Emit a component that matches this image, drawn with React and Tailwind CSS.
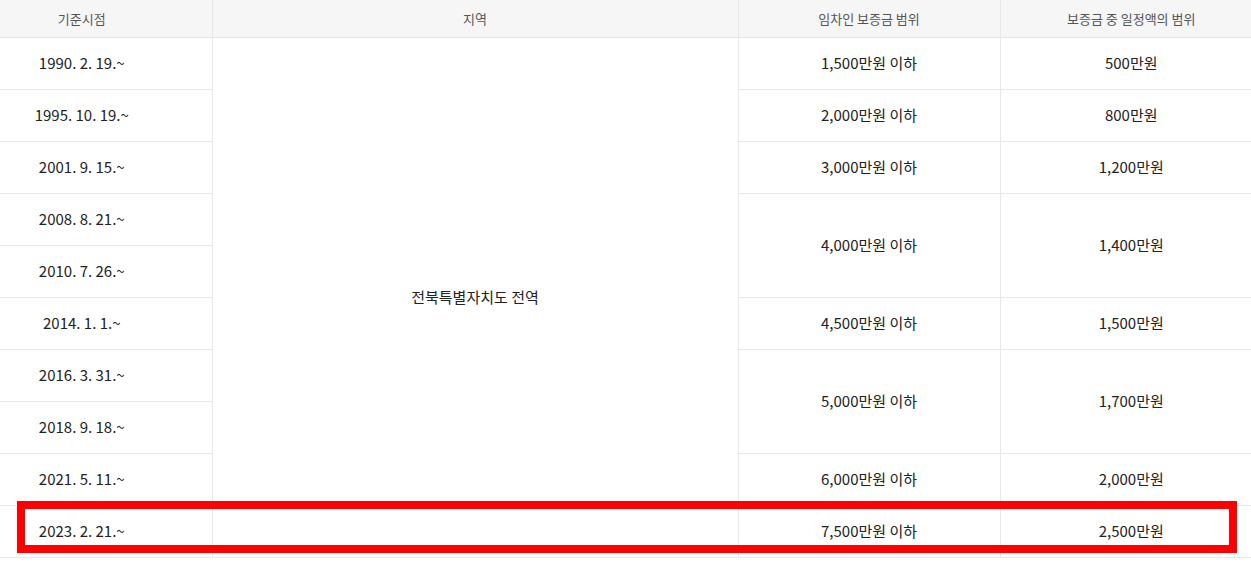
const rows = [
  { date: "1990. 2. 19.~", range: "1,500만원 이하", amount: "500만원" },
  { date: "1995. 10. 19.~", range: "2,000만원 이하", amount: "800만원" },
  { date: "2001. 9. 15.~", range: "3,000만원 이하", amount: "1,200만원" },
  { date: "2008. 8. 21.~", range: "4,000만원 이하", amount: "1,400만원", span: 2 },
  { date: "2010. 7. 26.~", skip: true },
  { date: "2014. 1. 1.~", range: "4,500만원 이하", amount: "1,500만원" },
  { date: "2016. 3. 31.~", range: "5,000만원 이하", amount: "1,700만원", span: 2 },
  { date: "2018. 9. 18.~", skip: true },
  { date: "2021. 5. 11.~", range: "6,000만원 이하", amount: "2,000만원" },
  { date: "2023. 2. 21.~", range: "7,500만원 이하", amount: "2,500만원" },
];

const cell = "border border-[#e8e8e8] text-center align-middle";

const App = () => {
  return (
    <div
      className="relative w-[1251px] h-[566px] bg-white overflow-hidden"
      style={{ fontFamily: '"Noto Sans CJK KR", "Noto Sans", sans-serif' }}
    >
      <table className="w-[1310px] table-fixed border-collapse -mt-px -ml-[48px]">
        <colgroup>
          <col className="w-[260px]" />
          <col className="w-[526px]" />
          <col className="w-[262px]" />
          <col className="w-[262px]" />
        </colgroup>
        <thead>
          <tr className="h-[38px] bg-[#f6f6f6] text-[13px] text-[#555]">
            <th className={`${cell} font-normal border-l-0`}>기준시점</th>
            <th className={`${cell} font-normal`}>지역</th>
            <th className={`${cell} font-normal`}>임차인 보증금 범위</th>
            <th className={`${cell} font-normal border-r-0`}>보증금 중 일정액의 범위</th>
          </tr>
        </thead>
        <tbody className="text-[15px] text-[#222]">
          {rows.map((r, i) => (
            <tr key={r.date} className="h-[52px]">
              <td className={`${cell} border-l-0`}>{r.date}</td>
              {i === 0 && (
                <td className={cell} rowSpan={10}>
                  전북특별자치도 전역
                </td>
              )}
              {!r.skip && (
                <td className={cell} rowSpan={r.span || 1}>
                  {r.range}
                </td>
              )}
              {!r.skip && (
                <td className={`${cell} border-r-0`} rowSpan={r.span || 1}>
                  {r.amount}
                </td>
              )}
            </tr>
          ))}
        </tbody>
      </table>

      {/* highlight box */}
      <div className="absolute left-[17px] top-[501px] w-[1220px] h-[52px] border-8 border-[#ff0000]" />
    </div>
  );
};

export default App;
